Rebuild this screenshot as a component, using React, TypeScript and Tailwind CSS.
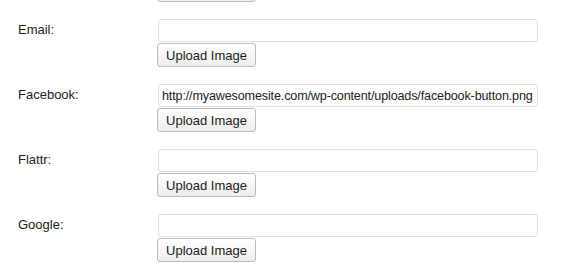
const rows: Array<{ label: string; value: string }> = [
  { label: "", value: "" },
  { label: "Email:", value: "" },
  { label: "Facebook:", value: "http://myawesomesite.com/wp-content/uploads/facebook-button.png" },
  { label: "Flattr:", value: "" },
  { label: "Google:", value: "" },
];

export default function App() {
  return (
    <div className="h-[269px] w-[582px] overflow-hidden bg-white font-['Liberation_Sans',Arial,sans-serif] text-[13px] text-[#222]">
      <div className="-mt-[46px] flex flex-col gap-[17px]">
        {rows.map((r, i) => (
          <div key={i} className="flex">
            <label className="w-[157px] shrink-0 pl-[18px] pt-[3px] leading-[16px]">{r.label}</label>
            <div className="flex flex-col items-start">
              <input
                type="text"
                defaultValue={r.value}
                className="ml-[1px] h-[23px] w-[380px] rounded-[3px] border border-[#dfdfdf] bg-white px-[3px] text-[12.6px] tracking-[-0.15px] text-[#222] outline-none"
              />
              {/* first row is scrolled mostly out of view, only its button's bottom edge shows */}
              <button className="mt-[1px] h-[24px] w-[99px] rounded-[3px] border border-[#bbb] bg-gradient-to-b from-white to-[#ededed] text-[13px] leading-none text-[#222]">
                {i === 0 ? "" : "Upload Image"}
              </button>
            </div>
          </div>
        ))}
      </div>
    </div>
  );
}
